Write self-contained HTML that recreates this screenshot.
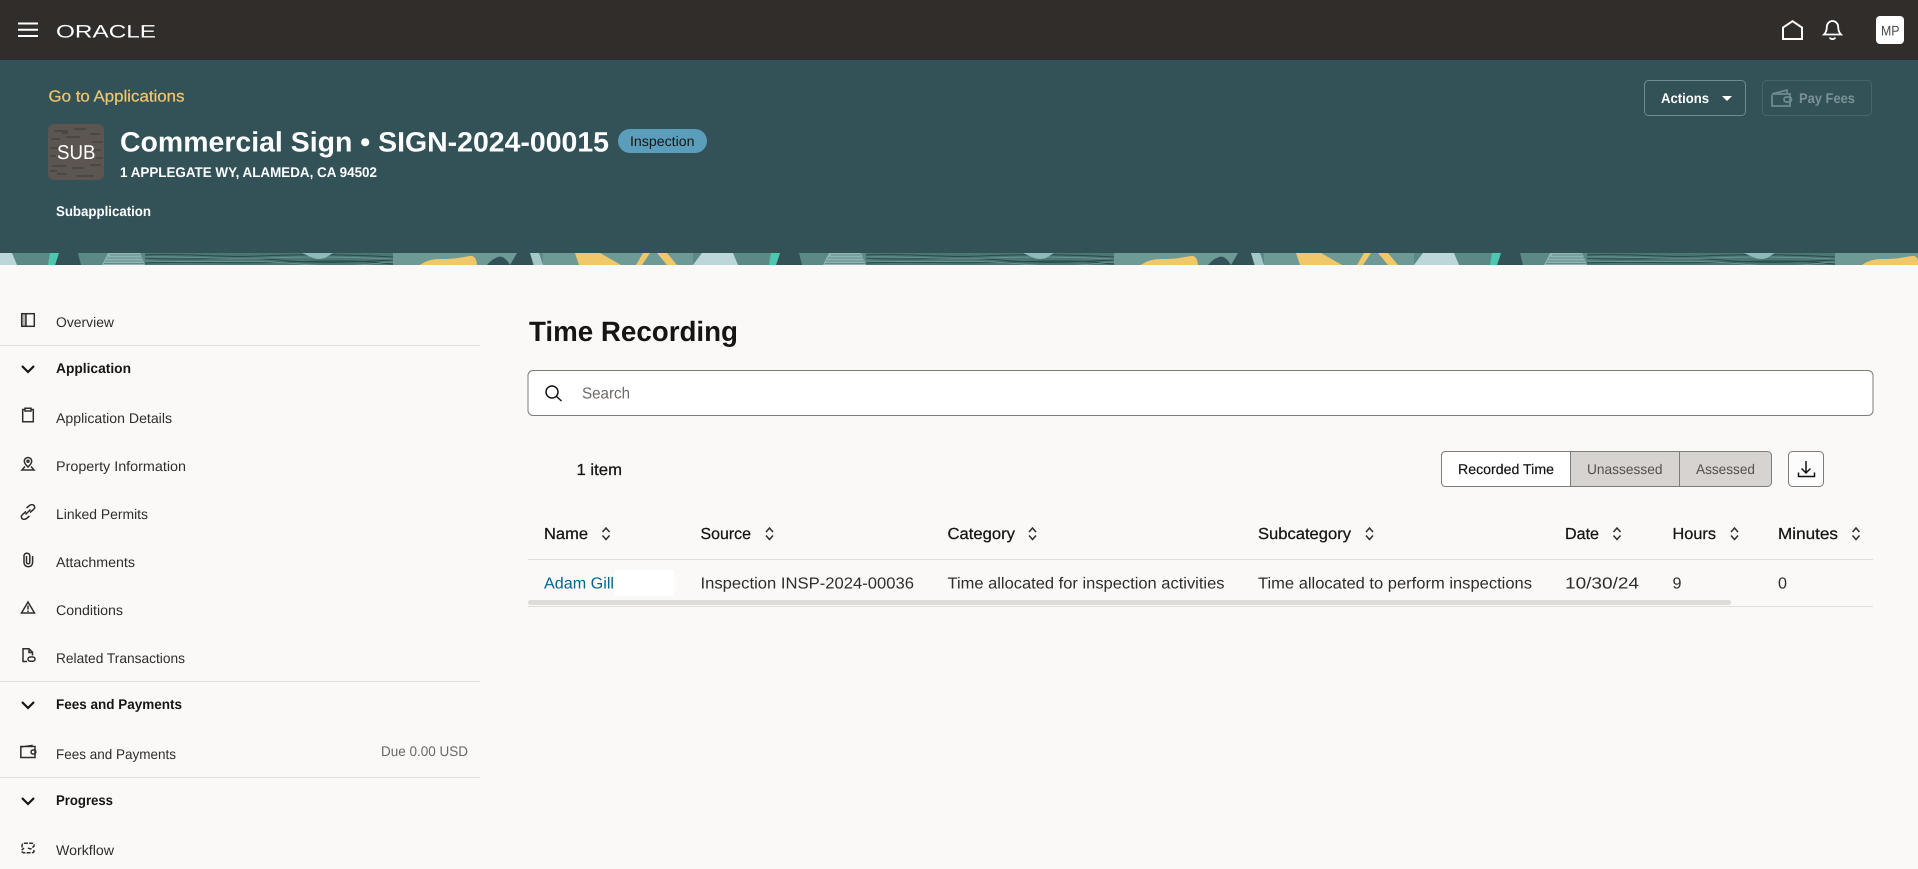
<!DOCTYPE html>
<html lang="en">
<head>
<meta charset="utf-8">
<title>Time Recording</title>
<style>
html,body{margin:0;padding:0;width:1918px;height:869px;overflow:hidden;background:#fbf9f8}
svg{display:block;font-family:"Liberation Sans",sans-serif}
text{text-rendering:geometricPrecision}
.t{font-size:14px;fill:#312d2a}
.b{font-size:14px;font-weight:bold;fill:#161513}
.h{font-size:16px;fill:#161513;stroke:#161513;stroke-width:.25}
.r{font-size:16px;fill:#312d2a}
.s{fill:none;stroke:#312d2a;stroke-width:1.5}
.i{fill:none;stroke:#312d2a;stroke-width:1.5}
</style>
</head>
<body>
<svg width="1918" height="869" viewBox="0 0 1918 869" xmlns="http://www.w3.org/2000/svg">
<defs>
<pattern id="strip" patternUnits="userSpaceOnUse" x="0" y="253" width="721" height="12">
<rect width="721" height="12" fill="#5b8a86"/>
<path d="M0 0H12L17 12H0ZM702 0H721V12H693ZM721 0H727L738 12H721Z" fill="#bcd6da"/>
<path d="M59 0H78L81 12H55Z" fill="#325258"/>
<path d="M50 0H59L55 12H48Z" fill="#4fc6b1"/>
<path d="M108 0H140L145 12H102Z" fill="#8fb5b2"/>
<path d="M110 2H140M107 5H142M105 8H143M104 10.500H144" stroke="#5f8c89" stroke-width="1"/>
<rect x="145" width="248" height="12" fill="#4a7774"/>
<path d="M145 2C190 0 220 5 260 3S340 1 393 4M145 5C180 8 240 3 280 7S350 9 393 7M145 10C190 8 230 11 290 9S360 8 393 11" fill="none" stroke="#2c4b4d" stroke-width="1.100"/>
<path d="M145 4C190 3 230 7 270 5S350 4 393 6M145 8C200 10 250 6 300 11S370 10 393 9" fill="none" stroke="#6f9a97" stroke-width=".8"/>
<path d="M302 0H333L325 5Q319 7 313 5Z" fill="#8fbaba"/>
<rect x="393" width="124" height="12" fill="#6e9a96"/>
<path d="M420 12Q428 6 440 6T458 5T470 3T477 12Z" fill="#f0c869"/>
<path d="M487 12Q492 6 498 4T510 12Z" fill="#325258"/>
<path d="M517 0H530L533 12H510Z" fill="#325258"/>
<path d="M530 0H539L543 12H534Z" fill="#a5c9c8"/>
<rect x="543" width="150" height="12" fill="#6e9a96"/>
<path d="M575 0H600L621 12H579Z" fill="#f0c869"/>
<path d="M643 0H650L642 12H636Z" fill="#f0c869"/>
<path d="M657 0H667L677 12H667Z" fill="#f0c869"/>
<path d="M702 0H727L738 12H693Z" fill="#bcd6da"/>
</pattern>
</defs>

<rect width="1918" height="869" fill="#fbf9f8"/>

<!-- top bar -->
<rect width="1918" height="60" fill="#312d2a"/>
<path d="M18 23.500H38M18 29.800H38M18 36H38" stroke="#fff" stroke-width="2"/>
<text x="56" y="37.300" font-size="18" fill="#fff" textLength="100" lengthAdjust="spacingAndGlyphs">ORACLE</text>
<path d="M1783 39V27.500L1792.500 21.200 1802 27.500V39Z" fill="none" stroke="#fff" stroke-width="2"/>
<path d="M1824 34.500c2-2 2.800-4 2.800-7.500a5.700 6 0 0 1 11.400 0c0 3.500.8 5.500 2.800 7.500ZM1829.700 37.500a3 2.500 0 0 0 5.600 0" fill="none" stroke="#fff" stroke-width="1.800"/>
<rect x="1876" y="16" width="28" height="28" rx="4" fill="#fff"/>
<text x="1881" y="35.500" font-size="14" fill="#4f4a45" textLength="18.500" lengthAdjust="spacingAndGlyphs">MP</text>

<!-- application header -->
<rect y="60" width="1918" height="193" fill="#325258"/>
<rect y="253" width="1918" height="12" fill="url(#strip)"/>
<text x="48.500" y="101.500" font-size="16" fill="#efc56b" stroke="#efc56b" stroke-width=".25" textLength="136" lengthAdjust="spacingAndGlyphs">Go to Applications</text>

<rect x="48" y="124" width="56" height="56" rx="6" fill="#5c5550"/>
<path d="M54 131h14M74 129h12M90 134h10M51 139h9M66 137h14M92 142h11M50 148h8M92 150h9M50 156h6M96 158h7M52 166h14M72 168h12M90 165h11M57 174h10M76 176h18M50 171h7M62 133h6" stroke="#35312e" stroke-width=".8"/>
<text x="57" y="159" font-size="20" fill="#fff" textLength="38.500" lengthAdjust="spacingAndGlyphs">SUB</text>

<text x="120" y="151.500" font-size="28" font-weight="bold" fill="#fff" textLength="489" lengthAdjust="spacingAndGlyphs">Commercial Sign • SIGN-2024-00015</text>
<rect x="618" y="129" width="89" height="24" rx="12" fill="#5b9ebb"/>
<text x="630" y="146" font-size="14" fill="#161513" textLength="64.500" lengthAdjust="spacingAndGlyphs">Inspection</text>
<text x="120" y="177" font-size="14" font-weight="bold" fill="#fff" textLength="257" lengthAdjust="spacingAndGlyphs">1 APPLEGATE WY, ALAMEDA, CA 94502</text>
<text x="56" y="216" font-size="14" font-weight="bold" fill="#fff" textLength="95" lengthAdjust="spacingAndGlyphs">Subapplication</text>

<rect x="1644.500" y="80.500" width="101" height="35" rx="4" fill="none" stroke="#6f8c90"/>
<text x="1661" y="103" font-size="14" font-weight="bold" fill="#fff" textLength="48" lengthAdjust="spacingAndGlyphs">Actions</text>
<path d="M1722 96H1732L1727 101Z" fill="#fff"/>
<rect x="1762.500" y="80.500" width="109" height="35" rx="4" fill="none" stroke="#486469"/>
<g fill="none" stroke="#6f8a8e" stroke-width="1.800">
<path d="M1772 95V106H1790V94H1772L1787 90V94"/>
<rect x="1784" y="97" width="7.500" height="5" rx="2.500"/>
</g>
<text x="1799" y="103" font-size="14" font-weight="bold" fill="#7b9195" textLength="56" lengthAdjust="spacingAndGlyphs">Pay Fees</text>

<!-- side navigation -->
<g fill="#e0dedb">
<rect y="345" width="480" height="1"/>
<rect y="681" width="480" height="1"/>
<rect y="777" width="480" height="1"/>
</g>
<g fill="none" stroke="#161513" stroke-width="2.200">
<path d="M22 366L28 372 34 366"/>
<path d="M22 702L28 708 34 702"/>
<path d="M22 798L28 804 34 798"/>
</g>
<text class="t" x="56" y="327" textLength="58" lengthAdjust="spacingAndGlyphs">Overview</text>
<text class="b" x="56" y="373" textLength="75" lengthAdjust="spacingAndGlyphs">Application</text>
<text class="t" x="56" y="423" textLength="116" lengthAdjust="spacingAndGlyphs">Application Details</text>
<text class="t" x="56" y="471" textLength="130" lengthAdjust="spacingAndGlyphs">Property Information</text>
<text class="t" x="56" y="519" textLength="92" lengthAdjust="spacingAndGlyphs">Linked Permits</text>
<text class="t" x="56" y="567" textLength="79" lengthAdjust="spacingAndGlyphs">Attachments</text>
<text class="t" x="56" y="615" textLength="67" lengthAdjust="spacingAndGlyphs">Conditions</text>
<text class="t" x="56" y="663" textLength="129" lengthAdjust="spacingAndGlyphs">Related Transactions</text>
<text class="b" x="56" y="709" textLength="126" lengthAdjust="spacingAndGlyphs">Fees and Payments</text>
<text class="t" x="56" y="759" textLength="120" lengthAdjust="spacingAndGlyphs">Fees and Payments</text>
<text x="381" y="756" font-size="14" fill="#6b6762" textLength="87" lengthAdjust="spacingAndGlyphs">Due 0.00 USD</text>
<text class="b" x="56" y="805" textLength="57" lengthAdjust="spacingAndGlyphs">Progress</text>
<text class="t" x="56" y="855" textLength="58" lengthAdjust="spacingAndGlyphs">Workflow</text>

<g class="i">
<!-- overview -->
<rect x="21.700" y="313.700" width="12.600" height="12.600"/>
<path d="M26 314V326"/>
<rect x="22" y="314" width="4" height="12" fill="#312d2a" fill-opacity=".35" stroke="none"/>
<!-- clipboard -->
<path d="M25 409.500H22.700V421.700H33.300V409.500H31M25 408.200H31V411H25Z"/>
<!-- property pin -->
<path d="M28 467c-2-2.200-3.700-3.500-3.700-5.800a3.700 3.700 0 0 1 7.400 0c0 2.300-1.700 3.600-3.700 5.800ZM25 466.500L22 470H34L31 466.500"/>
<circle cx="28" cy="461.200" r="1"/>
<!-- link -->
<path d="M26.500 508L29.500 505.500C31 504.300 33 504.300 34 505.500 35 506.800 34.800 508.300 33.500 509.500L30 512.500M29.500 516L26.500 518.500C25 519.700 23 519.700 22 518.500 21 517.200 21.200 515.700 22.500 514.500L26 511.500M25.500 514.500L30.500 509.500"/>
<!-- paperclip -->
<path d="M26.500 556V562.500A1.700 1.700 0 0 0 29.800 562.500V555.500A3 3 0 0 0 24 555.500V562.500A4.300 4.300 0 0 0 32.600 562.500V556"/>
<!-- triangle -->
<path d="M28 602L34.500 613H21.500Z"/>
<path d="M28 605.500V609.500M28 610.500V612"/>
<!-- related doc -->
<path d="M27 661.500H23V648.700H29L32.500 652.200V655.500M29 649V652.500H32.500"/>
<rect x="28" y="657" width="7" height="4.200" rx="2.100"/>
<!-- wallet -->
<path d="M20.800 750.500V757.500H35V746.500H20.800ZM20.800 747L32 745.500V747"/>
<rect x="31" y="750" width="4.800" height="4" rx="2"/>
<!-- workflow -->
<path d="M22 847.500V845.500C22 844 23 843.200 24.500 843.200H32C34 843.200 34.500 845 34 846L31.500 848.500C30.500 849.500 29 848.500 28 848M34 850V851C34 852 33 852.800 31.500 852.800H24C22 852.800 21.500 851 22 850L24 848" stroke-dasharray="4 1.200"/>
</g>

<!-- main -->
<text x="529" y="341" font-size="28" font-weight="bold" fill="#161513" textLength="209" lengthAdjust="spacingAndGlyphs">Time Recording</text>

<rect x="528" y="370.500" width="1345" height="45" rx="5" fill="#fff" stroke="#7f7c78"/>
<circle cx="552" cy="392" r="6" fill="none" stroke="#161513" stroke-width="1.500"/>
<path d="M556.500 396.500L561.500 401" stroke="#161513" stroke-width="1.500"/>
<text x="582" y="398.500" font-size="16" fill="#6f6b67" textLength="48" lengthAdjust="spacingAndGlyphs">Search</text>

<text class="h" x="576.500" y="475" textLength="45.500" lengthAdjust="spacingAndGlyphs">1 item</text>

<!-- segmented control -->
<rect x="1441.500" y="451.500" width="330" height="35" rx="4" fill="#d6d3d0" stroke="#7f7c78"/>
<path d="M1570.500 451.500H1445.500a4 4 0 0 0-4 4V482.500a4 4 0 0 0 4 4H1570.500Z" fill="#fff" stroke="#7f7c78"/>
<path d="M1679.500 452V486" stroke="#7f7c78"/>
<text x="1458" y="474" font-size="14" fill="#161513" stroke="#161513" stroke-width=".2" textLength="96" lengthAdjust="spacingAndGlyphs">Recorded Time</text>
<text x="1587" y="474" font-size="14" fill="#55514c" textLength="75.500" lengthAdjust="spacingAndGlyphs">Unassessed</text>
<text x="1696" y="474" font-size="14" fill="#55514c" textLength="59" lengthAdjust="spacingAndGlyphs">Assessed</text>

<rect x="1788.500" y="451.500" width="35" height="35" rx="4" fill="#fff" fill-opacity=".5" stroke="#7f7c78"/>
<path d="M1806 461V473M1801.500 468.500L1806 473 1810.500 468.500" fill="none" stroke="#161513" stroke-width="1.500"/>
<path d="M1798.500 472.500V476.500H1814.500V472.500" fill="none" stroke="#161513" stroke-width="1.500"/>

<!-- table header -->
<text class="h" x="544" y="539" textLength="44" lengthAdjust="spacingAndGlyphs">Name</text>
<text class="h" x="700.500" y="539" textLength="50.500" lengthAdjust="spacingAndGlyphs">Source</text>
<text class="h" x="947.500" y="539" textLength="67.500" lengthAdjust="spacingAndGlyphs">Category</text>
<text class="h" x="1258" y="539" textLength="93" lengthAdjust="spacingAndGlyphs">Subcategory</text>
<text class="h" x="1565" y="539" textLength="34" lengthAdjust="spacingAndGlyphs">Date</text>
<text class="h" x="1672.500" y="539" textLength="43.500" lengthAdjust="spacingAndGlyphs">Hours</text>
<text class="h" x="1778" y="539" textLength="60" lengthAdjust="spacingAndGlyphs">Minutes</text>
<g class="s">
<path d="M602.500 532L606 528 609.500 532M602.500 535.500L606 539.500 609.500 535.500"/>
<path d="M766 532L769.500 528 773 532M766 535.500L769.500 539.500 773 535.500"/>
<path d="M1029 532L1032.500 528 1036 532M1029 535.500L1032.500 539.500 1036 535.500"/>
<path d="M1366 532L1369.500 528 1373 532M1366 535.500L1369.500 539.500 1373 535.500"/>
<path d="M1613.500 532L1617 528 1620.500 532M1613.500 535.500L1617 539.500 1620.500 535.500"/>
<path d="M1731 532L1734.500 528 1738 532M1731 535.500L1734.500 539.500 1738 535.500"/>
<path d="M1852.500 532L1856 528 1859.500 532M1852.500 535.500L1856 539.500 1859.500 535.500"/>
</g>
<rect x="528" y="559" width="1345" height="1" fill="#e0dedb"/>

<!-- table row -->
<rect x="614.500" y="570" width="59.500" height="26" rx="1" fill="#fff"/>
<text x="544" y="588.500" font-size="16" fill="#00688c" textLength="70" lengthAdjust="spacingAndGlyphs">Adam Gill</text>
<text class="r" x="700.500" y="588.500" textLength="213.500" lengthAdjust="spacingAndGlyphs">Inspection INSP-2024-00036</text>
<text class="r" x="947.500" y="588.500" textLength="277" lengthAdjust="spacingAndGlyphs">Time allocated for inspection activities</text>
<text class="r" x="1258" y="588.500" textLength="274" lengthAdjust="spacingAndGlyphs">Time allocated to perform inspections</text>
<text class="r" x="1565" y="588.500" textLength="74" lengthAdjust="spacingAndGlyphs">10/30/24</text>
<text class="r" x="1672.500" y="588.500" textLength="9" lengthAdjust="spacingAndGlyphs">9</text>
<text class="r" x="1778" y="588.500" textLength="9" lengthAdjust="spacingAndGlyphs">0</text>

<rect x="528" y="600" width="1203" height="5" rx="2.500" fill="#dedcd9"/>
<rect x="528" y="606" width="1345" height="1" fill="#e0dedb"/>
</svg>
</body>
</html>
